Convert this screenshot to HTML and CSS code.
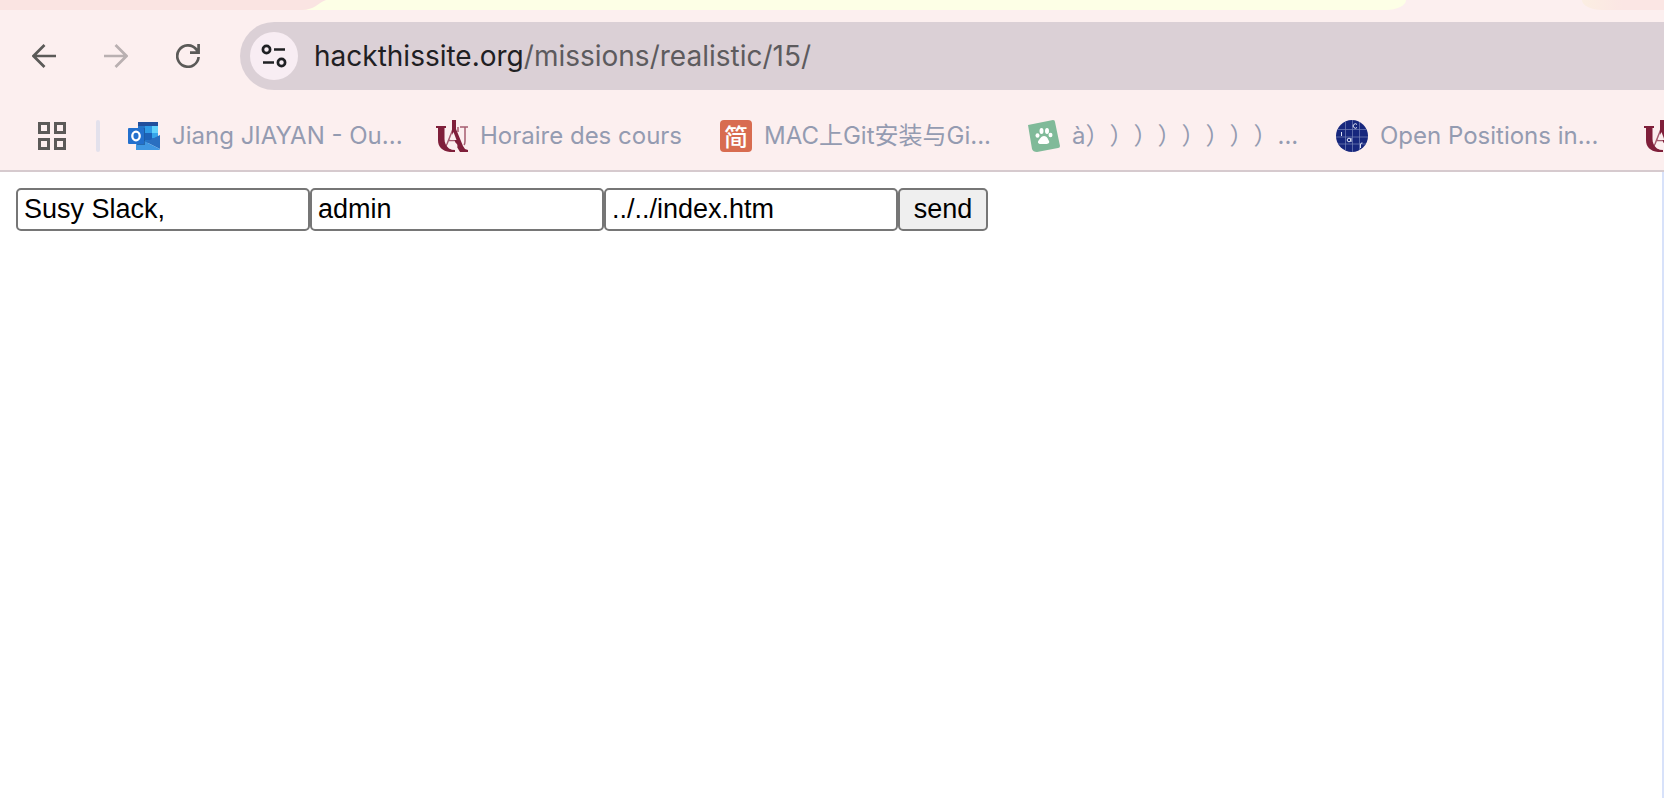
FILE: index.html
```html
<!DOCTYPE html>
<html lang="en">
<head>
<meta charset="utf-8">
<title>hackthissite.org</title>
<link rel="stylesheet" href="styles.css">
</head>
<body>
<svg class="defs" aria-hidden="true">
  <symbol id="crest" viewBox="0 0 32 32">
    <path d="M0 6h10v2H8.500v11c0 4 1.500 7 4.500 9.500l6 1.500v2h-5C6 31 2 27 2 20V8H0z" fill="#7f1f3a"/>
    <path d="M16 0h4v9l7 17 2 3 3 1v2h-8l-3-5-5-14z" fill="#7f1f3a"/>
    <path d="M17 9 11 24q-1 2-2 3M12 20.500h11M24 7h8M29 7v14q0 3-1 4M22 7v5" fill="none" stroke="#7f1f3a" stroke-width="1.500" opacity=".7"/>
    <path d="m17.500 12-3.500 8h6.500z" fill="#fcefef"/>
    <ellipse cx="17" cy="26" rx="4.500" ry="3.800" fill="#fcefef"/>
  </symbol>
</svg>
<header class="browser">
  <div class="tabs">
    <svg class="tab-start" viewBox="0 0 330 10" aria-hidden="true"><path d="M0 0H326C318 3 314 10 302 10H0Z" fill="#fae4e2"/></svg>
    <div class="tab-active"></div>
    <div class="tab-next"></div>
  </div>
  <div class="toolbar">
    <div class="nav">
      <button type="button" aria-label="Back"><svg viewBox="0 0 24 24"><path d="M24 12H2M12.500 1 1.500 12l11 11"/></svg></button>
      <button type="button" class="off" aria-label="Forward"><svg viewBox="0 0 24 24"><path d="M0 12h22M11.500 1l11 11-11 11"/></svg></button>
      <button type="button" aria-label="Reload"><svg viewBox="0 0 24 24"><path d="M22.600 13A10.700 10.700 0 1 1 20 5l2 3M22.600 0v8.600H14"/></svg></button>
    </div>
    <div class="address">
      <button type="button" class="site" aria-label="Site information"><svg viewBox="0 0 26 24"><circle cx="5.500" cy="5.500" r="3.600"/><path d="M13 5.500h11M2 18.500h11"/><circle cx="20.500" cy="18.500" r="3.600"/></svg></button>
      <div class="url"><span class="host">hackthissite.org</span>/missions/realistic/15/</div>
    </div>
  </div>
  <nav class="bookmarks" aria-label="Bookmarks">
    <button type="button" class="apps" aria-label="Apps"><svg viewBox="0 0 28 28"><path d="M1.500 1.500h9v9h-9zM17.500 1.500h9v9h-9zM1.500 17.500h9v9h-9zM17.500 17.500h9v9h-9z"/></svg></button>
    <span class="divider"></span>
    <a href="#"><svg viewBox="0 0 32 32" aria-hidden="true">
      <path d="M10 3q0-1 1-1h18q1 0 1 1v15l-11 5-9-5z" fill="#2475c8"/>
      <path d="M10 2h20v4H10z" fill="#214f9c"/>
      <path d="M17 6h7v7h-7z" fill="#2f9be6"/><path d="M24 6h6v7h-6z" fill="#62d2fb"/>
      <path d="M17 13h7v7h-7z" fill="#1d62b8"/><path d="M24 13h6v5h-6z" fill="#36a5ea"/>
      <path d="m8 17 11 6-11 7z" fill="#2f82d4"/>
      <path d="M32 15v14L18 22z" fill="#2a6fc0"/><path d="M8 30V17l24 12q0 1-1 1z" fill="#3f97e2"/>
      <path d="M10 8h7v17h-8z" fill="#164c8d" opacity=".6"/>
      <rect y="8" width="16" height="16" rx="1" fill="#2370cd"/><ellipse cx="8" cy="16" rx="3.700" ry="4.300" fill="none" stroke="#fff" stroke-width="2.300"/>
    </svg><span class="label">Jiang JIAYAN - Ou...</span></a>
    <a href="#"><svg aria-hidden="true"><use href="#crest"/></svg><span class="label short">Horaire des cours</span></a>
    <a href="#"><span class="jian" aria-hidden="true">简</span><span class="label">MAC上Git安装与Gi...</span></a>
    <a href="#"><svg viewBox="0 0 32 32" aria-hidden="true"><path d="M0 5 25 0q2 0 2 2l5 24q0 2-2 2L9 32q-4 0-5-3z" fill="#80ba99"/><g fill="#fff"><ellipse cx="13.500" cy="11" rx="2" ry="3"/><ellipse cx="19" cy="11" rx="2" ry="3"/><ellipse cx="9.500" cy="15.500" rx="2" ry="2.300"/><ellipse cx="22.500" cy="15" rx="2" ry="2.300"/><path d="M16 16c3 0 4 3 5 5s-1 3-3 3h-5c-3 0-4-2-2-4 1-1 2-4 5-4z"/></g></svg><span class="label">à））））））））...</span></a>
    <a href="#"><svg viewBox="0 0 32 32" aria-hidden="true"><circle cx="16" cy="16" r="16" fill="#17277d"/><path d="M9.500 2v28M16.500 0v32M23.500 2v28M2 9.500h28M0 17h32M2 24h28" stroke="#7584b9" stroke-width=".7"/><g fill="none" stroke="#dfe4f4"><path d="M21 4.500a2.200 2.200 0 1 0 0 3M5.500 12v4M24.500 28v-4q0-1 2-1"/><circle cx="13" cy="20" r="1.800"/><path d="M15 18v4"/></g></svg><span class="label">Open Positions in...</span></a>
    <a href="#" aria-label="Bookmark"><svg aria-hidden="true"><use href="#crest"/></svg></a>
  </nav>
</header>
<main class="page">
  <form class="fields">
    <input type="text" aria-label="Name" value="Susy Slack,">
    <input type="text" aria-label="User" value="admin">
    <input type="text" aria-label="File" value="../../index.htm">
    <button type="button">send</button>
  </form>
</main>
</body>
</html>
```
FILE: styles.css
```css
* { box-sizing: border-box; }
body {
  margin: 0;
  min-height: 100vh;
  display: flex;
  flex-direction: column;
  background: #fff;
  overflow: hidden;
}
button { margin: 0; padding: 0; border: 0; background: none; }
svg { display: block; flex: none; }
.defs { position: absolute; width: 0; height: 0; }

.browser {
  background: #fcefef;
  border-bottom: 2px solid #d6cace;
  font-family: Inter, "Noto Sans CJK SC", sans-serif;
}
.tabs { display: flex; height: 10px; overflow: hidden; background: #fcefef; }
.tab-start { width: 330px; height: 10px; background: #fdffe6; }
.tab-active { flex: 1; background: #fdffe6; border-bottom-right-radius: 20px 10px; }
.tab-next {
  width: 82px;
  margin-left: 176px;
  background: linear-gradient(90deg, #fbeee2, #fbe6e4 50%);
  border-bottom-left-radius: 20px 10px;
}

.toolbar { display: flex; padding: 12px 0 12px 32px; }
.nav { display: flex; align-items: center; gap: 48px; width: 208px; }
.nav svg { width: 24px; height: 24px; fill: none; stroke: #5b5a58; stroke-width: 2.7; }
.nav .off svg { stroke: #b9b0b1; }
.address {
  flex: 1;
  display: flex;
  align-items: center;
  gap: 16px;
  height: 68px;
  padding-left: 10px;
  background: #dbd0d6;
  border-radius: 34px 0 0 34px;
}
.site {
  display: flex;
  align-items: center;
  justify-content: center;
  width: 48px;
  height: 48px;
  border-radius: 50%;
  background: #f8edf3;
}
.site svg { width: 26px; height: 24px; fill: none; stroke: #1f2023; stroke-width: 2.7; }
.url { font-size: 28px; line-height: 36px; color: #5d5b5e; white-space: nowrap; }
.host { color: #1f2023; }

.bookmarks { display: flex; align-items: center; height: 68px; padding-left: 38px; overflow: hidden; }
.apps svg { width: 28px; height: 28px; fill: none; stroke: #5b5a58; stroke-width: 3; }
.divider { flex: none; width: 4px; height: 32px; margin: 0 28px 0 30px; border-radius: 2px; background: #e3e1ec; }
.bookmarks a {
  flex: none;
  display: flex;
  align-items: center;
  gap: 12px;
  margin-right: 40px;
  color: #949bb1;
  text-decoration: none;
}
.bookmarks a svg { width: 32px; height: 32px; }
.label {
  width: 224px;
  font-size: 24px;
  line-height: 32px;
  white-space: nowrap;
  text-spacing-trim: space-all;
}
.short { width: 200px; }
.jian {
  width: 32px;
  height: 32px;
  border-radius: 4px;
  background: #d86c50;
  color: #fff;
  font: 500 24px/32px "Noto Sans CJK SC", sans-serif;
  text-align: center;
}

.page { flex: 1; padding: 16px; border-right: 2px solid #d8e2fa; }
.fields { display: flex; }
.fields input, .fields button {
  height: 43px;
  border: 2px solid #767676;
  border-radius: 5px;
  font-family: "Liberation Sans", Arial, sans-serif;
  font-size: 27px;
  color: #000;
}
.fields input { width: 294px; padding: 0 6px; background: #fff; }
.fields button { width: 90px; background: #efefef; }
```
